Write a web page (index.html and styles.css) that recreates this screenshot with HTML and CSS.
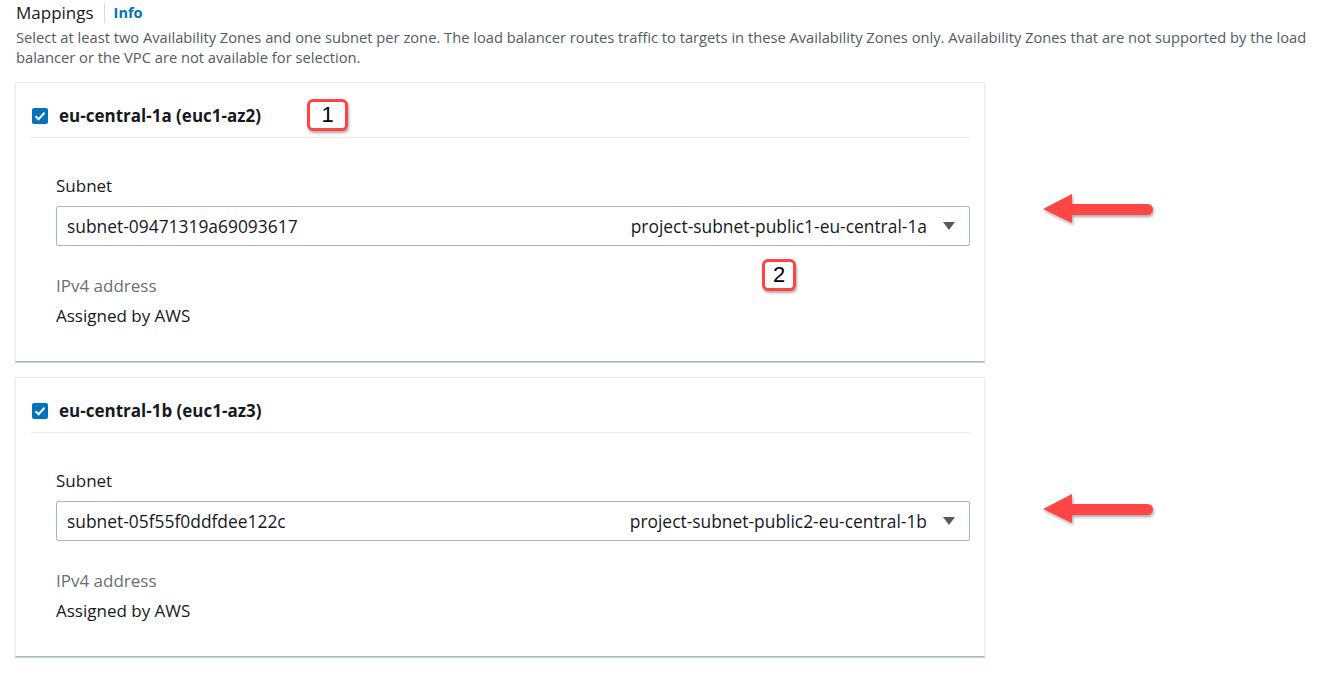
FILE: index.html
```html
<!DOCTYPE html>
<html>
<head>
<meta charset="utf-8">
<link rel="stylesheet" href="styles.css">
</head>
<body>
<div class="page">
  <div class="heading">
    <span class="title">Mappings</span>
    <span class="sep"></span>
    <a class="info">Info</a>
  </div>
  <p class="desc">Select at least two Availability Zones and one subnet per zone. The load balancer routes traffic to targets in these Availability Zones only. Availability Zones that are not supported by the load balancer or the VPC are not available for selection.</p>

  <div class="cards">
    <div class="card">
      <div class="card-head">
        <span class="check"><svg width="16" height="16" viewBox="0 0 16 16"><rect width="16" height="16" rx="2" fill="#0073bb"/><path d="M3.5 8.2 L6.6 11.2 L12.5 4.8" fill="none" stroke="#fff" stroke-width="2"/></svg></span>
        <span class="zone">eu-central-1a (euc1-az2)</span>
      </div>
      <div class="card-body">
        <div class="label">Subnet</div>
        <div class="select">
          <span class="sel-id">subnet-09471319a69093617</span>
          <span class="sel-name">project-subnet-public1-eu-central-1a</span>
          <svg class="caret" width="14" height="10" viewBox="0 0 14 10"><path d="M1 1 H13 L7 9 Z" fill="#545b64"/></svg>
        </div>
        <div class="sub-label">IPv4 address</div>
        <div class="value">Assigned by AWS</div>
      </div>
    </div>

    <div class="card">
      <div class="card-head">
        <span class="check"><svg width="16" height="16" viewBox="0 0 16 16"><rect width="16" height="16" rx="2" fill="#0073bb"/><path d="M3.5 8.2 L6.6 11.2 L12.5 4.8" fill="none" stroke="#fff" stroke-width="2"/></svg></span>
        <span class="zone">eu-central-1b (euc1-az3)</span>
      </div>
      <div class="card-body">
        <div class="label">Subnet</div>
        <div class="select">
          <span class="sel-id">subnet-05f55f0ddfdee122c</span>
          <span class="sel-name">project-subnet-public2-eu-central-1b</span>
          <svg class="caret" width="14" height="10" viewBox="0 0 14 10"><path d="M1 1 H13 L7 9 Z" fill="#545b64"/></svg>
        </div>
        <div class="sub-label">IPv4 address</div>
        <div class="value">Assigned by AWS</div>
      </div>
    </div>
  </div>

  <div class="badge badge-1">1</div>
  <div class="badge badge-2">2</div>

  <svg class="arrow arrow-1" width="130" height="40" viewBox="0 0 130 40">
    <defs><filter id="sh" x="-20%" y="-40%" width="140%" height="200%"><feDropShadow dx="1" dy="2" stdDeviation="1.5" flood-color="#000" flood-opacity="0.35"/></filter></defs>
    <path d="M3 19 L32 4 L32 14 H107.5 a5.5 5.5 0 0 1 0 11 H32 L32 33 Z" fill="#ff4444" filter="url(#sh)"/>
  </svg>
  <svg class="arrow arrow-2" width="130" height="40" viewBox="0 0 130 40">
    <path d="M3 19 L32 4 L32 14 H107.5 a5.5 5.5 0 0 1 0 11 H32 L32 33 Z" fill="#ff4444" filter="url(#sh)"/>
  </svg>
</div>
</body>
</html>
```

FILE: styles.css
```css
* { box-sizing: border-box; }
html, body { margin: 0; padding: 0; background: #fff; }
body {
  font-family: "Open Sans", "Noto Sans", Arial, sans-serif;
  color: #16191f;
  font-size: 14px;
}
.page {
  position: relative;
  width: 1337px;
  height: 677px;
  padding: 0 16px;
}
.heading {
  display: flex;
  align-items: center;
  height: 24px;
  padding-top: 1px;
}
.title {
  font-size: 17px;
  color: #16191f;
}
.sep {
  width: 1px;
  height: 20px;
  background: #d5dbdb;
  margin: 0 9px 0 10px;
}
.info {
  font-size: 14.5px;
  font-weight: 700;
  color: #0073bb;
}
.desc {
  margin: 3px 0 0;
  font-size: 14.7px;
  line-height: 20px;
  color: #545b64;
}
.cards {
  margin: 15px 0 0 -1px;
  width: 970px;
  display: flex;
  flex-direction: column;
  gap: 15px;
}
.card {
  border: 1px solid #eaeded;
  border-bottom: 1px solid #aab7b8;
  box-shadow: 0 1px 1px rgba(0, 28, 36, 0.2);
  padding: 0 14px 0 15px;
  background: #fff;
}
.card-head {
  display: flex;
  align-items: center;
  gap: 11px;
  height: 55px;
  padding: 11px 0 0 1px;
  border-bottom: 1px solid #eaeded;
}
.check { display: flex; }
.zone {
  font-size: 17px;
  font-weight: 700;
  color: #16191f;
}
.card-body {
  padding: 37px 0 34px 25px;
}
.label {
  font-size: 17px;
  line-height: 22px;
}
.select {
  margin-top: 9px;
  height: 40px;
  border: 1px solid #aab7b8;
  border-radius: 2px;
  display: flex;
  align-items: center;
  padding: 0 13px 0 10px;
  font-size: 17.4px;
}
.sel-id { flex: 1; }
.sel-name { margin-right: 15px; color: #16191f; }
.caret { display: block; }
.sub-label {
  margin-top: 29px;
  font-size: 17px;
  line-height: 22px;
  color: #687078;
}
.value {
  margin-top: 8px;
  font-size: 17px;
  line-height: 22px;
}
.badge {
  position: absolute;
  background: #fff;
  border: 3px solid #ff4444;
  border-radius: 6px;
  box-shadow: 1px 2px 3px rgba(0, 0, 0, 0.35);
  font-family: "Liberation Sans", Arial, sans-serif;
  font-size: 22px;
  color: #000;
  display: flex;
  align-items: center;
  justify-content: center;
}
.badge-1 { left: 307px; top: 99px; width: 41px; height: 32px; }
.badge-2 { left: 762px; top: 259px; width: 34px; height: 32px; }
.arrow { position: absolute; }
.arrow-1 { left: 1040px; top: 190px; }
.arrow-2 { left: 1040px; top: 490px; }
```
